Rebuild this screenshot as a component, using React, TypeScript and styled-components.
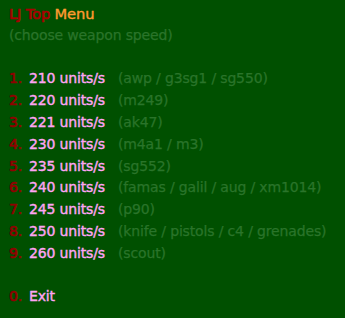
import * as React from "react";
import styled, { createGlobalStyle } from "styled-components";

const speeds = [
  { key: "1", speed: "210 units/s", weapons: "(awp / g3sg1 / sg550)" },
  { key: "2", speed: "220 units/s", weapons: "(m249)" },
  { key: "3", speed: "221 units/s", weapons: "(ak47)" },
  { key: "4", speed: "230 units/s", weapons: "(m4a1 / m3)" },
  { key: "5", speed: "235 units/s", weapons: "(sg552)" },
  { key: "6", speed: "240 units/s", weapons: "(famas / galil / aug / xm1014)" },
  { key: "7", speed: "245 units/s", weapons: "(p90)" },
  { key: "8", speed: "250 units/s", weapons: "(knife / pistols / c4 / grenades)" },
  { key: "9", speed: "260 units/s", weapons: "(scout)" },
];

const RED = "#a80000";
const ORANGE = "#ff9a30";
const DIM = "#2a742a";
const KEY = "#900000";
const PINK = "#ffa4f4";

const GlobalStyle = createGlobalStyle`
  html, body {
    margin: 0;
    background: #005000;
  }
`;

const Menu = styled.div`
  width: 345px;
  height: 318px;
  box-sizing: border-box;
  padding: 3px 0 0 9px;
  background: #005000;
  font-family: "DejaVu Sans", Verdana, sans-serif;
  font-size: 14px;
  line-height: 21.8px;
  letter-spacing: -0.15px;
  white-space: nowrap;
`;

const Title = styled.div`
  color: ${RED};
  font-size: 14.7px;
  -webkit-text-stroke: 0.7px ${RED};
`;

const Accent = styled.span`
  color: ${ORANGE};
  -webkit-text-stroke: 0.4px ${ORANGE};
`;

const Hint = styled.div<{ $gap?: boolean }>`
  color: ${DIM};
  -webkit-text-stroke: 0.25px ${DIM};
  margin-bottom: ${(p) => (p.$gap ? "21.8px" : "0")};
`;

const Row = styled.div<{ $gap?: boolean }>`
  display: grid;
  grid-template-columns: 20px 89px auto;
  margin-top: ${(p) => (p.$gap ? "21.8px" : "0")};
`;

const Key = styled.span`
  color: ${KEY};
  -webkit-text-stroke: 0.7px ${KEY};
`;

const Label = styled.span`
  color: ${PINK};
  -webkit-text-stroke: 0.4px ${PINK};
`;

const Weapons = styled.span`
  color: ${DIM};
  -webkit-text-stroke: 0.25px ${DIM};
`;

const App = () => {
  return (
    <>
      <GlobalStyle />
      <Menu>
        <Title>
          LJ Top <Accent>Menu</Accent>
        </Title>
        <Hint $gap>(choose weapon speed)</Hint>

        {speeds.map((s) => (
          <Row key={s.key}>
            <Key>{s.key}.</Key>
            <Label>{s.speed}</Label>
            <Weapons>{s.weapons}</Weapons>
          </Row>
        ))}

        <Row $gap>
          <Key>0.</Key>
          <Label>Exit</Label>
        </Row>
      </Menu>
    </>
  );
};

export default App;
